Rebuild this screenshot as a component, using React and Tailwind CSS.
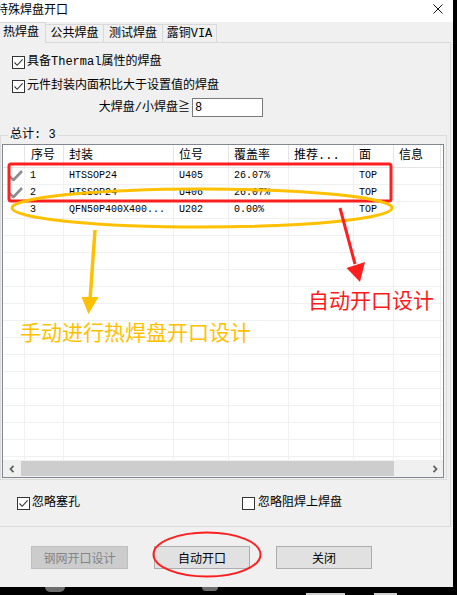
import React from "react";

const UI = "font-['Liberation_Mono','Noto_Sans_CJK_SC',monospace]";
const CJK = "font-['Noto_Sans_CJK_SC',sans-serif]";

const COLS = ["w-[22px]", "w-[39px]", "w-[110px]", "w-[55px]", "w-[60px]", "w-[65px]", "w-[40px]", "w-[47px]"];
const HEADERS = ["", "序号", "封装", "位号", "覆盖率", "推荐...", "面", "信息"];

const ROWS = [
  { no: "1", pkg: "HTSSOP24", ref: "U405", cov: "26.07%", side: "TOP", done: true },
  { no: "2", pkg: "HTSSOP24", ref: "U406", cov: "26.07%", side: "TOP", done: true },
  { no: "3", pkg: "QFN50P400X400...", ref: "U202", cov: "0.00%", side: "TOP" },
];

function Box({ checked }) {
  return (
    <span className="w-[13px] h-[13px] border border-[#333333] bg-white flex items-center justify-center shrink-0">
      {checked && (
        <svg width="11" height="11" viewBox="0 0 11 11">
          <path d="M1.5 5.5 L4.2 8.3 L9.6 2.4" fill="none" stroke="#333333" strokeWidth="1.1" />
        </svg>
      )}
    </span>
  );
}

function Tick() {
  return (
    <svg width="22" height="16" viewBox="0 0 22 16">
      <path d="M6 8 L10.5 12 L19 3" fill="none" stroke="#8d8d8d" strokeWidth="2.6" strokeLinejoin="round" />
    </svg>
  );
}

function Row({ row }) {
  const cells = row
    ? [null, row.no, row.pkg, row.ref, row.cov, "", row.side, ""]
    : ["", "", "", "", "", "", "", ""];
  return (
    <div className="flex h-[17px] shrink-0 border-b border-[#f0f0f0]">
      {cells.map((c, i) => (
        <div
          key={i}
          className={`${COLS[i]} shrink-0 border-r border-[#f0f0f0] flex items-center pl-[5px] text-[10px] leading-[16px] font-['Liberation_Mono',monospace] text-black whitespace-nowrap overflow-hidden`}
        >
          {i === 0 ? row?.done && <span className="-ml-[5px]"><Tick /></span> : c}
        </div>
      ))}
    </div>
  );
}

function Button({ children, disabled }) {
  return (
    <div
      className={`h-[23px] flex items-center justify-center border text-[12px] ${CJK} ${
        disabled ? "w-[97px] bg-[#cccccc] border-[#bfbfbf] text-[#838383]" : "w-[96px] bg-[#e1e1e1] border-[#adadad] text-black"
      }`}
    >
      {children}
    </div>
  );
}

export default function App() {
  return (
    <div className="relative w-[457px] h-[595px] bg-black overflow-hidden">
      <div className="w-[453px] h-[587px] bg-[#f0f0f0] flex flex-col">
        {/* Title bar */}
        <div className="h-[22px] bg-white flex items-start justify-between shrink-0">
          <span className={`-ml-[4px] mt-[2px] text-[12px] leading-[13px] text-black ${CJK}`}>特殊焊盘开口</span>
          <svg className="mt-[4px] mr-[10px]" width="10" height="10" viewBox="0 0 10 10">
            <path d="M0.5 0.5 L9.5 9.5 M9.5 0.5 L0.5 9.5" stroke="#111" strokeWidth="1" />
          </svg>
        </div>

        {/* Tabs */}
        <div className={`h-[20px] flex items-end shrink-0 text-[12px] text-black ${UI}`}>
          <div className="relative z-10 -mb-[1px] h-[21px] w-[46px] bg-[#f0f0f0] border-t border-r border-[#d9d9d9] flex items-center pl-[3px] leading-[14px]">
            热焊盘
          </div>
          <div className="h-[18px] w-[58px] border-t border-r border-[#d9d9d9] flex items-center justify-center leading-[14px]">公共焊盘</div>
          <div className="h-[18px] w-[59px] border-t border-r border-[#d9d9d9] flex items-center justify-center leading-[14px]">测试焊盘</div>
          <div className="h-[18px] w-[54px] border-t border-r border-[#d9d9d9] flex items-center justify-center leading-[14px]">露铜VIA</div>
        </div>

        {/* Tab page */}
        <div className={`w-[451px] h-[485px] border border-l-0 border-[#d9d9d9] flex flex-col shrink-0 text-[12px] text-black ${UI}`}>
          <div className="h-[24px] mt-[7px] flex items-center gap-[2px] pl-[12px] leading-[14px]">
            <Box checked />
            <span>具备Thermal属性的焊盘</span>
          </div>
          <div className="h-[24px] flex items-center gap-[2px] pl-[12px] leading-[14px]">
            <Box checked />
            <span>元件封装内面积比大于设置值的焊盘</span>
          </div>
          <div className="h-[19px] flex items-center">
            <span className="w-[192px] text-right pr-[2px] leading-[14px]">大焊盘/小焊盘≧</span>
            <div className="w-[71px] h-[19px] border border-[#7a7a7a] bg-white pl-[2px] flex items-center leading-[14px]">8</div>
          </div>

          <fieldset className="mt-[11px] w-[447px] border border-[#dcdcdc] pl-[1px] pr-[2px] pb-[1px]">
            <legend className="ml-[6px] px-[2px] leading-[14px]">总计: 3</legend>
            <div className="mt-[2px] h-[334px] w-[442px] border border-[#828790] bg-white flex flex-col">
              <div className="flex h-[23px] shrink-0 border-b border-[#e5e5e5]">
                {HEADERS.map((h, i) => (
                  <div
                    key={i}
                    className={`${COLS[i]} shrink-0 border-r border-[#e5e5e5] flex items-center ${i === 1 ? "pl-[6px]" : "pl-[5px]"} text-[12px] leading-[14px] whitespace-nowrap`}
                  >
                    {h}
                  </div>
                ))}
              </div>
              <div className="h-[292px] overflow-hidden flex flex-col">
                {ROWS.map((r) => (
                  <Row key={r.no} row={r} />
                ))}
                {Array.from({ length: 15 }).map((_, i) => (
                  <Row key={`e${i}`} />
                ))}
              </div>
              <div className="h-[17px] flex bg-[#f0f0f0] shrink-0">
                <div className="w-[18px] flex items-center justify-center">
                  <svg width="6" height="8" viewBox="0 0 6 8">
                    <path d="M4.5 0.8 L1.5 4 L4.5 7.2" fill="none" stroke="#606060" strokeWidth="1.8" />
                  </svg>
                </div>
                <div className="w-[373px] my-[1px] bg-[#cdcdcd]" />
                <div className="flex-1" />
                <div className="w-[17px] flex items-center justify-center">
                  <svg width="6" height="8" viewBox="0 0 6 8">
                    <path d="M1.5 0.8 L4.5 4 L1.5 7.2" fill="none" stroke="#606060" strokeWidth="1.8" />
                  </svg>
                </div>
              </div>
            </div>
          </fieldset>

          <div className="h-[24px] mt-[11px] flex items-center leading-[14px]">
            <div className="w-[242px] pl-[17px] flex items-center gap-[2px]">
              <Box checked />
              <span>忽略塞孔</span>
            </div>
            <div className="flex items-center gap-[3px]">
              <Box />
              <span>忽略阻焊上焊盘</span>
            </div>
          </div>
        </div>

        {/* Buttons */}
        <div className="mt-[19px] flex gap-[26px] pl-[31px]">
          <Button disabled>钢网开口设计</Button>
          <Button>自动开口</Button>
          <Button>关闭</Button>
        </div>
      </div>

      {/* Desktop bits below the window */}
      <div className="h-[8px] flex items-start">
        <div className="ml-[45px] w-[20px] h-[5px] rounded-b-full bg-[#6d6d6d]" />
        <div className="ml-[137px] w-[16px] h-[4px] rounded-b-full bg-[#6d6d6d]" />
        <div className="ml-[88px] mt-[6px] w-[39px] h-[2px] bg-[#cfcfcf]" />
        <div className="ml-[29px] mt-[6px] w-[23px] h-[2px] bg-[#cfcfcf]" />
      </div>

      {/* Annotations drawn over the dialog */}
      <svg className="absolute left-0 top-0 pointer-events-none" width="457" height="595" viewBox="0 0 457 595">
        <rect x="9" y="164" width="382" height="37" rx="2" fill="none" stroke="#ff1f1f" strokeWidth="3" />
        <ellipse cx="202" cy="208" rx="190" ry="19" fill="none" stroke="#ffc000" strokeWidth="3" />
        <path d="M95 230 L90 300" stroke="#ffc000" strokeWidth="3.5" />
        <polygon points="81.5,297 98.5,297 88.5,314" fill="#ffc000" />
        <path d="M340 208 L355 264" stroke="#ff1f1f" strokeWidth="3" />
        <polygon points="346.5,268 365,262 360,282" fill="#ff1f1f" />
        <ellipse cx="207" cy="554.5" rx="53.5" ry="22" fill="none" stroke="#ff1f1f" strokeWidth="2" />
      </svg>
      <span className={`absolute left-[20px] top-[321px] text-[21px] leading-[21px] text-[#ffc000] ${CJK}`}>
        手动进行热焊盘开口设计
      </span>
      <span className={`absolute left-[308px] top-[289px] text-[21px] leading-[21px] text-[#ff1a1a] ${CJK}`}>
        自动开口设计
      </span>
    </div>
  );
}
